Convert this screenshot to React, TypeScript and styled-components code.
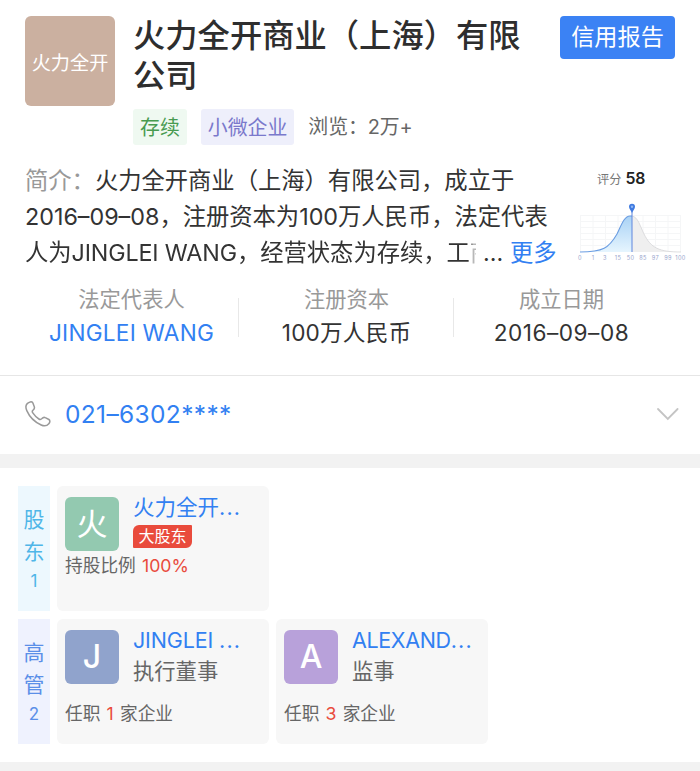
import React from 'react';
import styled, { createGlobalStyle } from 'styled-components';

const GlobalStyle = createGlobalStyle`
  * { box-sizing: border-box; }
  body {
    margin: 0;
    background: #fff;
    font-family: Inter, 'Noto Sans CJK SC', sans-serif;
    font-weight: 400;
    color: #333;
    text-spacing-trim: space-all;
  }
`;

const Page = styled.div`
  width: 700px;
  height: 771px;
  overflow: hidden;
  background: #fff;
`;

const Header = styled.header`
  display: flex;
  align-items: flex-start;
  height: 163px;
  padding: 15.5px 25px 0;
`;

const Logo = styled.div`
  width: 90px;
  height: 90px;
  border-radius: 6px;
  background: #cbb0a0;
  color: #fff;
  font-size: 19.2px;
  line-height: 94px;
  text-align: center;
  white-space: nowrap;
`;

const Heading = styled.div`
  width: 400px;
  margin-left: 18px;
`;

const Title = styled.h1`
  margin: 0;
  color: #2e2e2e;
  font-size: 32.3px;
  font-weight: 500;
  line-height: 40px;
  white-space: nowrap;
`;

const Tags = styled.div`
  display: flex;
  align-items: center;
  height: 36px;
  margin-top: 13.5px;
`;

const Tag = styled.span<{ $bg: string; $fg: string }>`
  height: 36px;
  margin-right: 14px;
  padding: 0 7px;
  border-radius: 3px;
  background: ${(p) => p.$bg};
  color: ${(p) => p.$fg};
  font-size: 19.9px;
  line-height: 38px;
`;

const Views = styled.span`
  color: #666;
  font-size: 19.9px;
  line-height: 38px;
  letter-spacing: -0.1px;
`;

const ReportButton = styled.button`
  width: 115px;
  height: 43px;
  margin-left: 27px;
  flex-shrink: 0;
  padding: 0;
  border: 0;
  border-radius: 4px;
  background: #3b82f4;
  color: #fff;
  font: inherit;
  font-size: 23.2px;
  line-height: 43px;
  white-space: nowrap;
`;

const Summary = styled.section`
  display: flex;
  height: 111px;
  padding-left: 25px;
`;

const Intro = styled.div`
  width: 550px;
`;

const IntroLine = styled.div`
  display: flex;
  height: 36px;
  font-size: 23.3px;
  line-height: 36px;
  white-space: nowrap;
`;

const Latin = styled.span`
  letter-spacing: -0.15px;
`;

const Muted = styled.span`
  color: #999;
`;

const Clipped = styled.span`
  width: 451px;
  overflow: hidden;
  mask-image: linear-gradient(to right, #000 446px, rgba(0, 0, 0, 0.35) 448px);
`;

const Dots = styled.span`
  width: 34px;
  padding-left: 7px;
`;

const More = styled.a`
  color: #3280f2;
`;

const Score = styled.div`
  width: 125px;
  padding-top: 5px;
`;

const ScoreLabel = styled.div`
  display: flex;
  align-items: baseline;
  gap: 4px;
  height: 22px;
  padding-left: 22px;
  color: #777;
  font-size: 12.3px;
  line-height: 22px;
`;

const ScoreValue = styled.strong`
  color: #222;
  font-size: 15.8px;
  font-weight: 600;
  letter-spacing: -0.3px;
`;

const Chart = styled.svg`
  display: block;
  margin-top: 13px;
`;

const Facts = styled.section`
  display: flex;
  height: 102px;
  padding: 9px 25px 0 24px;
  border-bottom: 1px solid #e6e6e6;
`;

const Fact = styled.div`
  position: relative;
  width: 215px;
  text-align: center;
  white-space: nowrap;

  & + &::before {
    content: '';
    position: absolute;
    left: -1px;
    top: 15px;
    width: 1px;
    height: 39px;
    background: #e8e8e8;
  }
`;

const FactLabel = styled.div`
  height: 33px;
  color: #999;
  font-size: 21.3px;
  line-height: 32px;
`;

const FactValue = styled.div<{ $link?: boolean; $spacing?: number }>`
  height: 34px;
  color: ${(p) => (p.$link ? '#3280f2' : '#333')};
  font-size: 22.6px;
  line-height: 34px;
  letter-spacing: ${(p) => p.$spacing ?? 0}px;
`;

const Contact = styled.section`
  display: flex;
  align-items: center;
  height: 78px;
  padding: 0 20px 2px 24px;
`;

const Phone = styled.a`
  flex: 1;
  margin-left: 13px;
  color: #3280f2;
  font-size: 24.5px;
  line-height: 36px;
  letter-spacing: 0.35px;
`;

const Band = styled.div`
  height: 14px;
  background: #f2f2f2;
`;

const People = styled.section`
  display: grid;
  gap: 8px;
  height: 294px;
  padding: 18px 18px 18px;
  align-content: start;
`;

const Row = styled.div`
  display: flex;
  gap: 7px;
  height: 125px;
`;

const Side = styled.div<{ $bg: string; $fg: string }>`
  display: flex;
  flex-direction: column;
  align-items: center;
  width: 32px;
  padding-top: 18px;
  background: ${(p) => p.$bg};
  color: ${(p) => p.$fg};
  font-size: 21px;
  line-height: 32px;
`;

const SideCount = styled.span`
  font-size: 17px;
  line-height: 27px;
`;

const Card = styled.article`
  width: 212px;
  padding: 11px 8px 10px;
  border-radius: 6px;
  background: #f7f7f7;
  white-space: nowrap;
`;

const CardTop = styled.div`
  display: flex;
  height: 54px;
`;

const Avatar = styled.div<{ $bg: string; $cjk?: boolean }>`
  width: 54px;
  height: 54px;
  margin-right: 14px;
  border-radius: 6px;
  background: ${(p) => p.$bg};
  color: #fff;
  font-size: ${(p) => (p.$cjk ? 31 : 32)}px;
  font-weight: ${(p) => (p.$cjk ? 400 : 500)};
  line-height: 54px;
  text-align: center;
`;

const Name = styled.div<{ $spacing?: number }>`
  height: 27px;
  margin-top: -4px;
  color: #3280f2;
  font-size: 21.5px;
  line-height: 28px;
  letter-spacing: ${(p) => p.$spacing ?? 0}px;
`;

const NameDots = styled.span`
  letter-spacing: 1.2px;
`;

const Role = styled.div`
  margin-top: 2px;
  color: #666;
  font-size: 21.3px;
  line-height: 32px;
`;

const Major = styled.span`
  display: block;
  width: 59px;
  height: 23px;
  margin-top: 5px;
  border-radius: 6px 1px 6px 1px;
  background: #e94b3c;
  color: #fff;
  font-size: 16px;
  line-height: 22px;
  text-align: center;
`;

const Note = styled.div<{ $top: number }>`
  margin-top: ${(p) => p.$top}px;
  color: #666;
  font-size: 17.7px;
  line-height: 26px;
  word-spacing: 1.2px;
`;

const Hot = styled.span`
  color: #e94b3c;
`;

const ticks: [string, number][] = [
  ['0', 5], ['1', 18], ['3', 30], ['15', 43], ['50', 55.5], ['85', 68], ['97', 80.5], ['99', 93], ['100', 105.5],
];

function ScoreChart() {
  return (
    <Chart width="120" height="64" viewBox="0 0 120 64">
      <defs>
        <linearGradient id="scoreFill" x1="0" y1="0" x2="0" y2="1">
          <stop offset="0" stopColor="#a9d2f5" />
          <stop offset="1" stopColor="#e6f5fe" />
        </linearGradient>
      </defs>
      <g stroke="#f5f6f7" strokeWidth="1">
        {[12.5, 18.5, 24.5, 30.5, 36.5, 42.5].map((y) => <path key={y} d={`M5 ${y}H106`} />)}
        {[5.5, 18, 30.5, 43, 68, 80.5, 93, 105.5].map((x) => <path key={x} d={`M${x} 12V49`} />)}
      </g>
      <path d="M5 49C28 49 34 45 42 31C46 23 49 13 55 13H57V49Z" fill="url(#scoreFill)" />
      <path d="M57 13C63 14 65 23 69 31C76 45 84 49 106 49H57Z" fill="#efefef" />
      <path d="M57 13C63 14 65 23 69 31C76 45 84 49 106 49" fill="none" stroke="#d6d6d8" strokeWidth=".8" />
      <path d="M5 49C28 49 34 45 42 31C46 23 49 13 55 13H57" fill="none" stroke="#6b9de2" strokeWidth="1.1" />
      <path d="M57 8V49" stroke="#5e86de" strokeWidth="1" />
      <path d="M57 10C56 7.5 54 6 54 3.7A3 3 0 0 1 60 3.7C60 6 58 7.5 57 10Z" fill="#3f7ae0" />
      <circle cx="57" cy="3.7" r="1.2" fill="#8eb5f2" />
      <g fill="#98a5cc" fontFamily="Inter, sans-serif" fontSize="5.6" textAnchor="middle" letterSpacing=".4">
        {ticks.map(([t, x]) => <text key={t} x={x} y="56.8">{t}</text>)}
      </g>
    </Chart>
  );
}

function PhoneIcon() {
  return (
    <svg width="28" height="28" viewBox="0 0 28 28" fill="none" stroke="#999" strokeWidth="1.5" strokeLinejoin="round">
      <path d="M3.2 3.6C5 1.8 7.8 1.2 8.8 2.8L10.2 6.4C10.8 8 10.5 8.9 9.3 9.8C8 10.7 8 11.7 8.8 12.9C10.6 15.6 12.4 17.4 14.9 19C16.1 19.8 17 19.7 18 18.6C19 17.4 20 17 21.3 17.7L24.9 19.5C26.3 20.4 26.1 22.1 24.8 23.7C22.9 26 20.4 26.5 17.2 25C10.5 21.9 5.4 16.6 2.8 10.6C1.5 7.6 1.6 5.2 3.2 3.6Z" />
    </svg>
  );
}

function Chevron() {
  return (
    <svg width="24" height="16" viewBox="0 0 24 16" fill="none" stroke="#c4c4c4" strokeWidth="1.8" strokeLinecap="round">
      <path d="M2 3L11.8 13L21.6 3" />
    </svg>
  );
}

export default function App() {
  return (
    <Page>
      <GlobalStyle />
      <Header>
        <Logo>火力全开</Logo>
        <Heading>
          <Title>火力全开商业（上海）有限<br />公司</Title>
          <Tags>
            <Tag $bg="#eff9f1" $fg="#489b50">存续</Tag>
            <Tag $bg="#eeeffb" $fg="#7a79cc">小微企业</Tag>
            <Views>浏览：2万+</Views>
          </Tags>
        </Heading>
        <ReportButton>信用报告</ReportButton>
      </Header>
      <Summary>
        <Intro>
          <IntroLine><Muted>简介：</Muted>火力全开商业（上海）有限公司，成立于</IntroLine>
          <IntroLine>2016–09–08，注册资本为100万人民币，法定代表</IntroLine>
          <IntroLine>
            <Clipped>人为<Latin>JINGLEI WANG</Latin>，经营状态为存续，工商</Clipped>
            <Dots>...</Dots>
            <More>更多</More>
          </IntroLine>
        </Intro>
        <Score>
          <ScoreLabel>评分<ScoreValue>58</ScoreValue></ScoreLabel>
          <ScoreChart />
        </Score>
      </Summary>
      <Facts>
        <Fact>
          <FactLabel>法定代表人</FactLabel>
          <FactValue $link $spacing={0.25}>JINGLEI WANG</FactValue>
        </Fact>
        <Fact>
          <FactLabel>注册资本</FactLabel>
          <FactValue $spacing={0.2}>100万人民币</FactValue>
        </Fact>
        <Fact>
          <FactLabel>成立日期</FactLabel>
          <FactValue $spacing={0.5}>2016–09–08</FactValue>
        </Fact>
      </Facts>
      <Contact>
        <PhoneIcon />
        <Phone>021–6302****</Phone>
        <Chevron />
      </Contact>
      <Band />
      <People>
        <Row>
          <Side $bg="#edf8fe" $fg="#4fb6e8">股<span>东</span><SideCount>1</SideCount></Side>
          <Card>
            <CardTop>
              <Avatar $bg="#93c9b0" $cjk>火</Avatar>
              <div>
                <Name>火力全开<NameDots>...</NameDots></Name>
                <Major>大股东</Major>
              </div>
            </CardTop>
            <Note $top={2}>持股比例 <Hot>100%</Hot></Note>
          </Card>
        </Row>
        <Row>
          <Side $bg="#eff2fe" $fg="#5b8fe8">高<span>管</span><SideCount>2</SideCount></Side>
          <Card>
            <CardTop>
              <Avatar $bg="#90a3cc">J</Avatar>
              <div>
                <Name $spacing={-0.15}>JINGLEI <NameDots>...</NameDots></Name>
                <Role>执行董事</Role>
              </div>
            </CardTop>
            <Note $top={17}>任职 <Hot>1</Hot> 家企业</Note>
          </Card>
          <Card>
            <CardTop>
              <Avatar $bg="#b8a1da">A</Avatar>
              <div>
                <Name $spacing={-0.35}>ALEXAND<NameDots>...</NameDots></Name>
                <Role>监事</Role>
              </div>
            </CardTop>
            <Note $top={17}>任职 <Hot>3</Hot> 家企业</Note>
          </Card>
        </Row>
      </People>
      <Band />
    </Page>
  );
}
